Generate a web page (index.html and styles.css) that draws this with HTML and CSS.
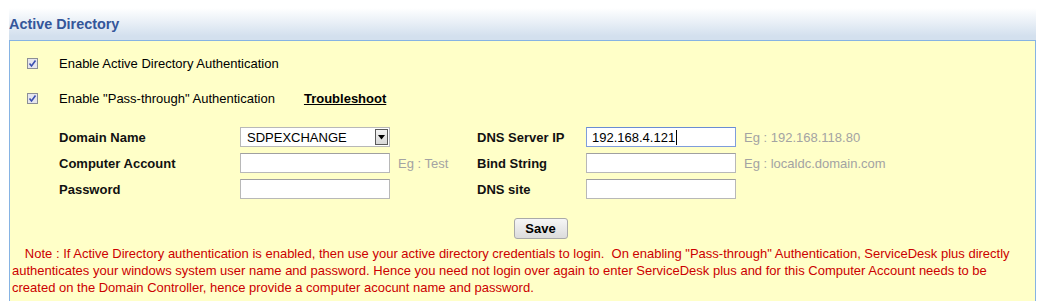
FILE: index.html
```html
<!DOCTYPE html>
<html>
<head>
<meta charset="utf-8">
<link rel="stylesheet" href="styles.css">
</head>
<body>
<div class="header"><h1 class="title">Active Directory</h1></div>
<div class="panel">
  <div class="check-row">
    <span class="cb"><svg width="11" height="11" viewBox="0 0 11 11"><rect x="0.5" y="0.5" width="10" height="10" fill="#e6e6ee" stroke="#8c8f96"/><path d="M2.5 5.5 L4.5 8 L8.5 2.5" fill="none" stroke="#3a4fb0" stroke-width="1.6"/></svg></span>
    <span class="cb-label">Enable Active Directory Authentication</span>
  </div>
  <div class="check-row second">
    <span class="cb"><svg width="11" height="11" viewBox="0 0 11 11"><rect x="0.5" y="0.5" width="10" height="10" fill="#e6e6ee" stroke="#8c8f96"/><path d="M2.5 5.5 L4.5 8 L8.5 2.5" fill="none" stroke="#3a4fb0" stroke-width="1.6"/></svg></span>
    <span class="cb-label">Enable "Pass-through" Authentication</span>
    <a class="trouble">Troubleshoot</a>
  </div>

  <div class="form">
    <div class="lbl">Domain Name</div>
    <div class="cell"><div class="select"><span class="sel-text">SDPEXCHANGE</span><span class="sel-btn"><svg width="9" height="5" viewBox="0 0 9 5"><path d="M1 0 H8 L4.5 4.5 Z" fill="#000"/></svg></span></div></div>
    <div class="eg"></div>
    <div class="lbl">DNS Server IP</div>
    <div class="cell"><div class="input focused">192.168.4.121<span class="caret"></span></div></div>
    <div class="eg">Eg : 192.168.118.80</div>

    <div class="lbl">Computer Account</div>
    <div class="cell"><div class="input"></div></div>
    <div class="eg">Eg : Test</div>
    <div class="lbl">Bind String</div>
    <div class="cell"><div class="input"></div></div>
    <div class="eg">Eg : localdc.domain.com</div>

    <div class="lbl">Password</div>
    <div class="cell"><div class="input"></div></div>
    <div class="eg"></div>
    <div class="lbl">DNS site</div>
    <div class="cell"><div class="input"></div></div>
    <div class="eg"></div>
  </div>

  <div class="actions"><button class="save">Save</button></div>

  <p class="note">&nbsp;&nbsp;&nbsp;Note : If Active Directory authentication is enabled, then use your active directory credentials to login.&nbsp; On enabling "Pass-through" Authentication, ServiceDesk plus directly authenticates your windows system user name and password. Hence you need not login over again to enter ServiceDesk plus and for this Computer Account needs to be created on the Domain Controller, hence provide a computer acocunt name and password.</p>
</div>
</body>
</html>
```
FILE: styles.css
```css
html, body {
  margin: 0;
  padding: 0;
  background: #ffffff;
  font-family: "Liberation Sans", Arial, sans-serif;
  font-size: 13px;
  color: #000;
}
.header {
  margin-left: 9px;
  width: 1027px;
  height: 40px;
  background: linear-gradient(to bottom, #ffffff 0px, #ffffff 8px, #d3e0ee 36px, #d3e0ee 40px);
  box-sizing: border-box;
  padding-top: 16px;
}
.title {
  margin: 0;
  font-size: 14.4px;
  font-weight: bold;
  color: #34569a;
  line-height: 16px;
}
.panel {
  margin-left: 9px;
  width: 1027px;
  height: 261px;
  box-sizing: border-box;
  background: #ffffc8;
  border-top: 1px solid #86b3e3;
  border-left: 1px solid #86b3e3;
  border-right: 1px solid #86b3e3;
  padding-top: 12px;
}
.check-row {
  display: flex;
  align-items: center;
  height: 20px;
  padding-left: 17px;
}
.check-row.second {
  margin-top: 15px;
}
.cb {
  display: flex;
  width: 11px;
  height: 11px;
}
.cb-label {
  margin-left: 21px;
}
.trouble {
  margin-left: 29px;
  font-weight: bold;
  text-decoration: underline;
  color: #000;
}
.form {
  margin-top: 19px;
  display: grid;
  grid-template-columns: 181px 158px 79px 109px 158px auto;
  grid-auto-rows: 20px;
  row-gap: 6px;
  padding-left: 49px;
}
.lbl {
  font-weight: bold;
  display: flex;
  align-items: center;
  color: #111;
}
.cell {
  display: flex;
  align-items: center;
}
.eg {
  display: flex;
  align-items: center;
  color: #a3a3a3;
}
.input {
  width: 150px;
  height: 20px;
  box-sizing: border-box;
  background: #fff;
  border: 1px solid #b8b8b8;
  border-top-color: #a0a0a0;
  display: flex;
  align-items: center;
  padding-left: 5px;
  font-size: 13px;
}
.input.focused {
  border: 1px solid #7f9ddb;
  border-top-color: #6a8cd3;
}
.caret {
  display: inline-block;
  width: 1px;
  height: 15px;
  background: #000;
  margin-left: 1px;
}
.select {
  width: 150px;
  height: 20px;
  box-sizing: border-box;
  background: #fff;
  border: 1px solid #b8b8b8;
  display: flex;
  align-items: center;
  justify-content: space-between;
  padding-left: 6px;
  padding-right: 1px;
}
.sel-btn {
  width: 13px;
  height: 16px;
  box-sizing: border-box;
  border: 1px solid #5a5a5a;
  background: linear-gradient(to bottom, #f2f2f2, #d8d8d8);
  display: flex;
  align-items: center;
  justify-content: center;
}
.actions {
  display: flex;
  justify-content: center;
  margin-top: 19px;
  padding-left: 36px;
}
.save {
  width: 54px;
  height: 21px;
  box-sizing: border-box;
  border: 1px solid #a9a9a9;
  border-radius: 3px;
  background: linear-gradient(to bottom, #f6f6f6, #dcdcdc);
  font-family: "Liberation Sans", Arial, sans-serif;
  font-size: 13px;
  font-weight: bold;
  color: #000;
  padding: 0;
}
.note {
  margin: 6px 0 0 0;
  padding: 0 4px 0 2px;
  text-indent: 2px;
  color: #cc0000;
  line-height: 17px;
  font-size: 13px;
}
```
